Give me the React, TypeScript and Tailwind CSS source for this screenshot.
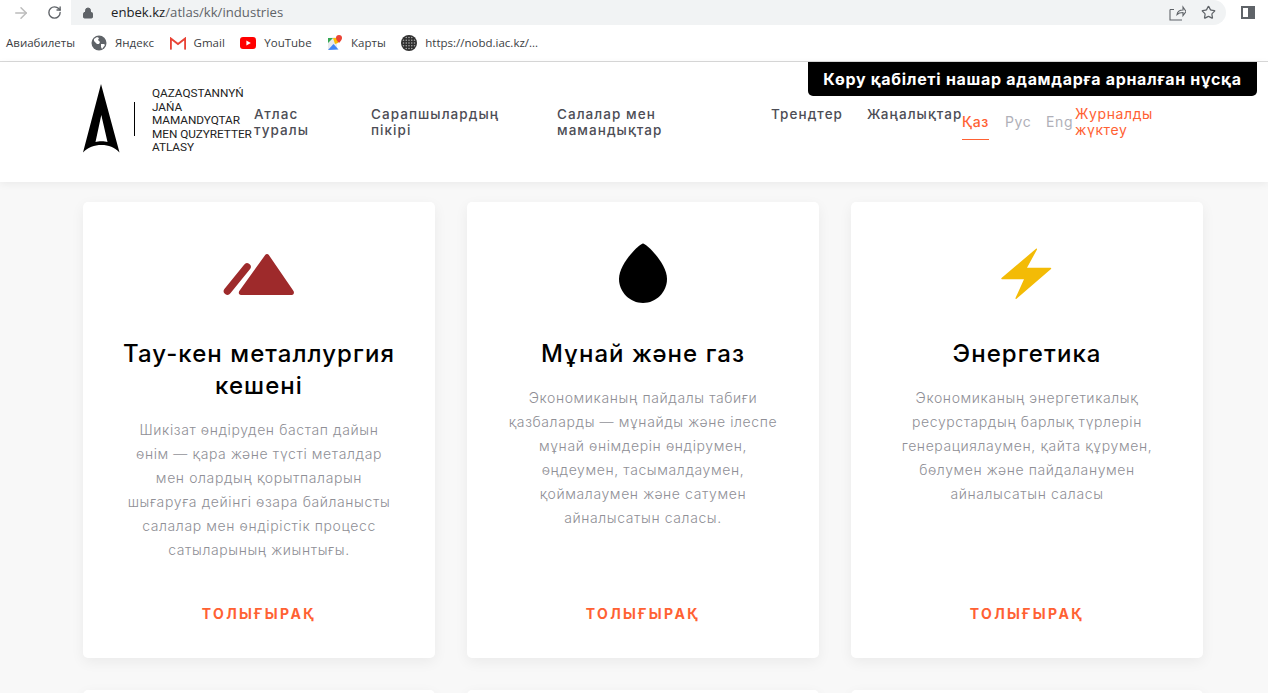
import React from "react";
import { ArrowRight, RotateCw, Lock, Star } from "lucide-react";

const font = "font-['Inter','Noto_Sans',sans-serif]";

const bookmarks = [
  { name: "Яндекс", icon: "globe" },
  { name: "Gmail", icon: "gmail" },
  { name: "YouTube", icon: "youtube" },
  { name: "Карты", icon: "maps" },
  { name: "https://nobd.iac.kz/...", icon: "nobd" },
];

function BookmarkIcon({ icon }: { icon: string }) {
  if (icon === "globe") {
    return (
      <svg width="16" height="16" viewBox="0 0 16 16">
        <circle cx="8" cy="8" r="7.5" fill="#5f6368" />
        <path d="M3 4l3-2 2 1-1 2 2 2-1 2-2 0-3-3zM10 9l3 0 1 1-3 4-1-2z" fill="#fff" />
      </svg>
    );
  }
  if (icon === "gmail") {
    return (
      <svg width="16" height="13" viewBox="0 0 16 13">
        <path d="M0.8 13V1.500L8 7l7.200-5.500V13" fill="none" stroke="#d8d8d8" strokeWidth="1.400" />
        <path d="M0.900 12.500V1.500L8 7l7.100-5.500v11" fill="none" stroke="#ea4335" strokeWidth="1.800" />
      </svg>
    );
  }
  if (icon === "youtube") {
    return (
      <svg width="16" height="12" viewBox="0 0 16 12">
        <rect width="16" height="12" rx="3" fill="#ff0000" />
        <path d="M6.400 3.400L10.800 6l-4.400 2.600z" fill="#fff" />
      </svg>
    );
  }
  if (icon === "maps") {
    return (
      <svg width="16" height="16" viewBox="0 0 16 16">
        <path d="M1 3l9-1v12l-9 1z" fill="#e8eaed" />
        <path d="M1 3h5L1 8z" fill="#34a853" />
        <path d="M1 15l5.500-6 5 5.500z" fill="#4285f4" />
        <path d="M6 3h5v5L8 9z" fill="#fbbc04" />
        <path d="M12 0a3 3 0 0 1 3 3c0 2-3 5-3 5S9 5 9 3a3 3 0 0 1 3-3z" fill="#ea4335" />
      </svg>
    );
  }
  return (
    <svg width="16" height="16" viewBox="0 0 16 16">
      <circle cx="8" cy="8" r="8" fill="#2f2f2f" />
      {[2.500, 5.250, 8, 10.750, 13.500].map((x) =>
        [2.500, 5.250, 8, 10.750, 13.500].map((y) =>
          (x - 8) * (x - 8) + (y - 8) * (y - 8) < 50 ? (
            <circle key={`${x}-${y}`} cx={x} cy={y} r="0.800" fill="#a8a8a8" />
          ) : null
        )
      )}
    </svg>
  );
}

function BrowserChrome() {
  return (
    <div className="bg-white border-b border-[#d9d9d9] font-['Open_Sans',sans-serif]">
      <div className="h-[25px] flex items-center">
        <ArrowRight className="w-[18px] h-[18px] ml-[12px] text-[#bcbcbc]" strokeWidth={2} />
        <RotateCw className="w-[15px] h-[15px] ml-[17px] text-[#5f6368]" strokeWidth={2.200} />
        <div className="ml-[9px] w-[1155px] h-[25px] bg-[#f1f3f4] rounded-r-full rounded-bl-[12px] flex items-center pl-[11px]">
          <Lock className="w-[12px] h-[12px] text-[#5f6368]" fill="#5f6368" />
          <span className="ml-[17px] text-[13.150px] text-[#202124]">enbek.kz</span>
          <span className="text-[13.150px] text-[#5f6368]">/atlas/kk/industries</span>
          <svg width="17" height="17" viewBox="0 0 17 17" className="ml-auto">
            <path
              d="M1 5.500V16h12M1 5.500h4M8 10.500c.5-3 3-4.500 6-4.500V3l3 4.500-3 4V8.500c-2.500 0-4.500.5-6 2z"
              fill="none"
              stroke="#5f6368"
              strokeWidth="1.100"
            />
          </svg>
          <Star className="w-[15px] h-[15px] ml-[15px] mr-[10px] text-[#5f6368]" strokeWidth={2} />
        </div>
        <div className="ml-[15px] w-[14px] h-[13px] border-2 border-[#5f6368] flex justify-end">
          <div className="w-[5px] bg-[#5f6368]" />
        </div>
      </div>
      <div className="h-[36px] flex items-center pl-[6px] text-[11.500px] text-[#3c4043]">
        <span>Авиабилеты</span>
        <div className="flex items-center ml-[16px] gap-[15.500px]">
          {bookmarks.map((b) => (
            <div key={b.name} className="flex items-center gap-[8px]">
              <BookmarkIcon icon={b.icon} />
              <span>{b.name}</span>
            </div>
          ))}
        </div>
      </div>
    </div>
  );
}

function Logo() {
  return (
    <div className="flex items-center w-[171px] shrink-0">
      <svg width="37" height="70" viewBox="0 0 37 70" className="shrink-0">
        <path
          d="M18 0L36.500 68.500C31 63 26 61 18.500 61C11 61 5.500 63 0 68.500ZM18.300 31L12.500 58C15 57 22 57 24.500 58Z"
          fill="#000"
          fillRule="evenodd"
        />
      </svg>
      <div className="w-px h-[34px] bg-black ml-[14px] shrink-0" />
      <div className="ml-[17px] mt-[4px] text-[11.800px] leading-[13.500px] -tracking-[0.05px] text-[#222] font-['Roboto',sans-serif] whitespace-nowrap">
        QAZAQSTANNYŃ<br />JAŃA<br />MAMANDYQTAR<br />MEN QUZYRETTER<br />ATLASY
      </div>
    </div>
  );
}

const navItems = [
  { label: ["Атлас", "туралы"], width: "w-[117px]" },
  { label: ["Сарапшылардың", "пікірі"], width: "w-[186px]" },
  { label: ["Салалар мен", "мамандықтар"], width: "w-[214px]" },
  { label: ["Трендтер"], width: "w-[96px]" },
  { label: ["Жаңалықтар"], width: "w-[95px]" },
];

function SiteHeader() {
  return (
    <div className="relative h-[120px] bg-white shadow-[0_2px_8px_rgba(0,0,0,0.06)] flex items-start pl-[83px] pt-[21px]">
      <Logo />
      <div className="flex pt-[23px] text-[13.500px] leading-[16px] font-medium tracking-[1.050px] text-[#4d4d55]">
        {navItems.map((item) => (
          <div key={item.label[0]} className={item.width}>
            {item.label.map((line) => (
              <div key={line} className="whitespace-nowrap">{line}</div>
            ))}
          </div>
        ))}
      </div>
      <div className="flex items-start pt-[30px] text-[14px] leading-[18px] tracking-[0.6px]">
        <div className="w-[27px] h-[27px] border-b border-[#ff6133] text-[#ff6133] font-medium whitespace-nowrap">Қаз</div>
        <div className="ml-[16px] w-[25px] text-[#b0b0b8]">Рус</div>
        <div className="ml-[16px] w-[29px] text-[#b0b0b8]">Eng</div>
      </div>
      <div className="pt-[23px] text-[14px] leading-[16px] tracking-[0.6px] text-[#ff6133] whitespace-nowrap">
        Журналды<br />жүктеу
      </div>
      <div className="absolute top-0 left-[808px] w-[449px] h-[34px] bg-black rounded-b-[5px] flex items-center justify-center text-white text-[16px] font-bold tracking-[0.7px] whitespace-nowrap">
        Көру қабілеті нашар адамдарға арналған нұсқа
      </div>
    </div>
  );
}

function MiningIcon() {
  return (
    <svg width="72" height="44" viewBox="0 0 72 44">
      <path d="M4.500 40L24 16" fill="none" stroke="#9e2a2b" strokeWidth="7.500" strokeLinecap="round" />
      <path
        d="M42 4.200c1-1.600 3-1.600 4 0L70.500 40c1 1.600.2 4-1.700 4H18c-2 0-2.800-2.200-1.700-4z"
        fill="#9e2a2b"
      />
    </svg>
  );
}

function DropIcon() {
  return (
    <svg width="48" height="60" viewBox="0 0 48 60">
      <path d="M24 .5C27 .5 48 20 48 36C48 49 37 60 24 60C11 60 0 49 0 36C0 20 21 .5 24 .5Z" fill="#000" />
    </svg>
  );
}

function BoltIcon() {
  return (
    <svg width="52" height="52" viewBox="0 0 52 52" className="translate-y-px -translate-x-px">
      <path
        d="M36 .8L1.500 30c-.5.5-.2 1.200.5 1.200H24L15.500 50c-.3.8.4 1.200 1 .7L51 21c.5-.5.2-1.200-.5-1.200H27L37 1.500c.3-.8-.5-1.200-1-.7z"
        fill="#f3bb06"
      />
    </svg>
  );
}

const cards = [
  {
    icon: <MiningIcon />,
    title: ["Тау-кен металлургия", "кешені"],
    text: [
      "Шикізат өндіруден бастап дайын",
      "өнім — қара және түсті металдар",
      "мен олардың қорытпаларын",
      "шығаруға дейінгі өзара байланысты",
      "салалар мен өндірістік процесс",
      "сатыларының жиынтығы.",
    ],
  },
  {
    icon: <DropIcon />,
    title: ["Мұнай және газ"],
    text: [
      "Экономиканың пайдалы табиғи",
      "қазбаларды — мұнайды және ілеспе",
      "мұнай өнімдерін өндірумен,",
      "өңдеумен, тасымалдаумен,",
      "қоймалаумен және сатумен",
      "айналысатын саласы.",
    ],
  },
  {
    icon: <BoltIcon />,
    title: ["Энергетика"],
    text: [
      "Экономиканың энергетикалық",
      "ресурстардың барлық түрлерін",
      "генерациялаумен, қайта құрумен,",
      "бөлумен және пайдаланумен",
      "айналысатын саласы",
    ],
  },
];

function Card({ card }: { card: (typeof cards)[number] }) {
  return (
    <div className="bg-white rounded-[5px] shadow-[0_4px_14px_rgba(0,0,0,0.06)] h-[456px] flex flex-col items-center text-center pt-[41px]">
      <div className="h-[60px] flex items-center justify-center">{card.icon}</div>
      <div className="mt-[35px] text-[24px] leading-[32px] font-medium tracking-[1.050px] text-black whitespace-nowrap">
        {card.title.map((line) => (
          <div key={line}>{line}</div>
        ))}
      </div>
      <div className="mt-[16px] text-[14px] leading-[24px] font-light tracking-[0.6px] text-[#8f8f96] whitespace-nowrap">
        {card.text.map((line) => (
          <div key={line}>{line}</div>
        ))}
      </div>
      <div className="mt-auto mb-[35px] text-[14px] leading-[18px] font-bold tracking-[2.400px] text-[#ff6133]">
        ТОЛЫҒЫРАҚ
      </div>
    </div>
  );
}

export default function App() {
  return (
    <div className={`h-[693px] overflow-hidden bg-[#f8f8f8] ${font}`}>
      <BrowserChrome />
      <SiteHeader />
      <div className="grid grid-cols-3 gap-x-[32px] gap-y-[32px] w-[1120px] ml-[83px] mt-[20px]">
        {cards.map((card) => (
          <Card key={card.title[0]} card={card} />
        ))}
        <div className="bg-white rounded-[5px] h-[100px] shadow-[0_4px_14px_rgba(0,0,0,0.06)]" />
        <div className="bg-white rounded-[5px] h-[100px] shadow-[0_4px_14px_rgba(0,0,0,0.06)]" />
        <div className="bg-white rounded-[5px] h-[100px] shadow-[0_4px_14px_rgba(0,0,0,0.06)]" />
      </div>
    </div>
  );
}
